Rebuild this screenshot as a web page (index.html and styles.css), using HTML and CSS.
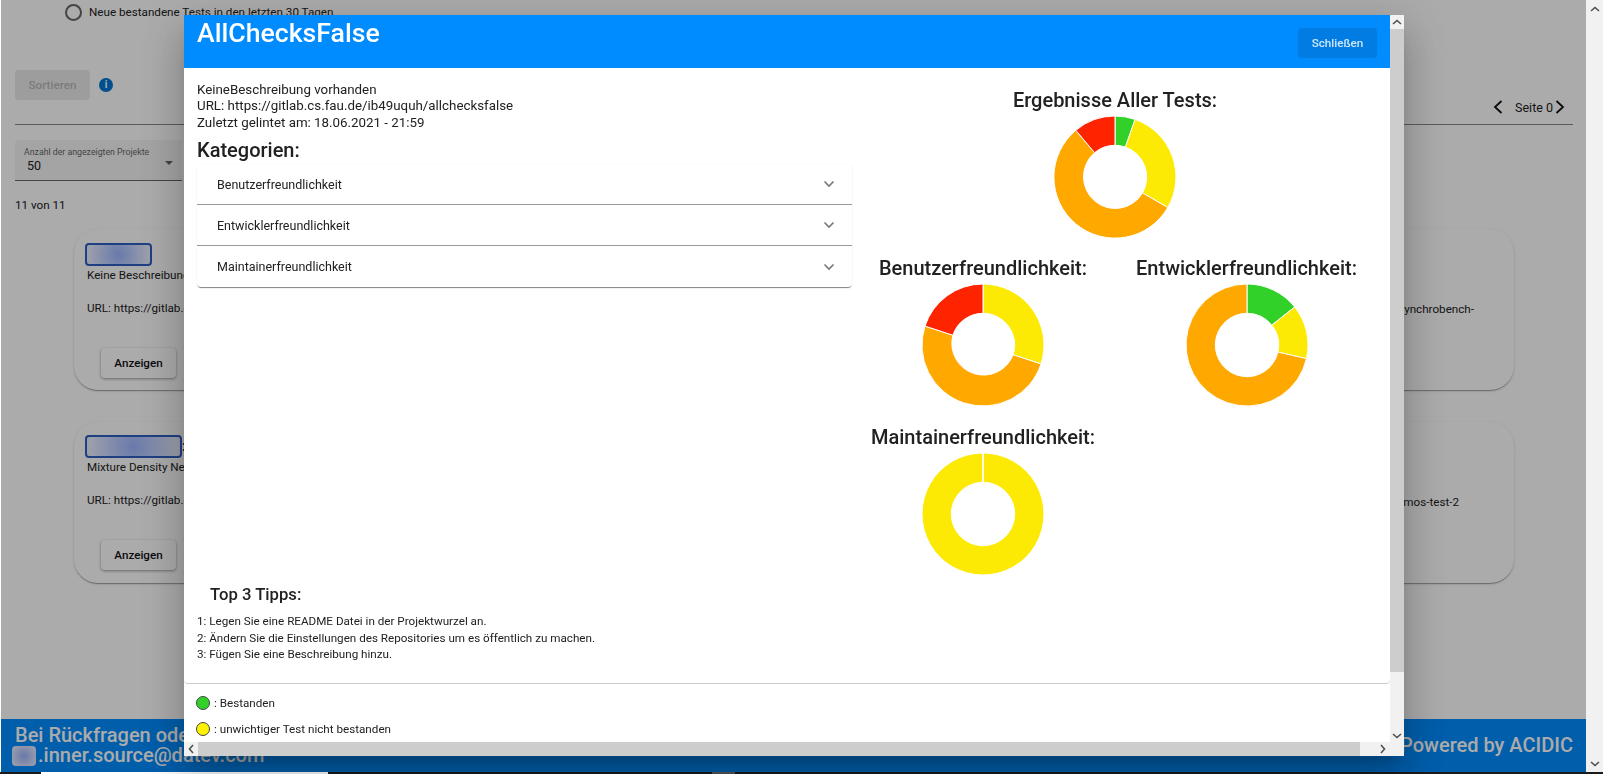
FILE: index.html
```html
<!DOCTYPE html>
<html lang="de">
<head>
<meta charset="UTF-8">
<meta name="viewport" content="width=device-width, initial-scale=1.0">
<title>AllChecksFalse</title>
<link rel="stylesheet" href="styles.css">
</head>
<body>
    <div class="page">
        <div class="radio-row">
            <span class="radio"></span>
            <span>Neue bestandene Tests in den letzten 30 Tagen</span>
        </div>
        <div class="sort-row">
            <div class="sort-left">
                <button class="sort-button">Sortieren</button>
                <span class="info-icon">i</span>
            </div>
            <div class="pager">
                <svg class="chevron" viewBox="0 0 10 14"><path d="M8.5 1 L2 7 L8.5 13"/></svg>
                <span class="pager-label">Seite 0</span>
                <svg class="chevron" viewBox="0 0 10 14"><path d="M1.5 1 L8 7 L1.5 13"/></svg>
            </div>
        </div>
        <div class="select-field">
            <div class="select-label">Anzahl der angezeigten Projekte</div>
            <div class="select-value">50</div>
            <span class="select-arrow"></span>
        </div>
        <div class="count">11 von 11</div>
        <div class="card-grid">
            <div class="card">
                <div class="card-title"><span class="redact redact-short"></span></div>
                <p class="card-desc">Keine Beschreibung</p>
                <p class="card-url">URL: https://gitlab.cs.fau.de</p>
                <button class="show-button">Anzeigen</button>
                <span class="card-tail">synchrobench-</span>
            </div>
            <div class="card">
                <div class="card-title"><span class="redact redact-long"></span>:</div>
                <p class="card-desc">Mixture Density Networks</p>
                <p class="card-url">URL: https://gitlab.cs.fau.de</p>
                <button class="show-button">Anzeigen</button>
                <span class="card-tail card-tail-short">mos-test-2</span>
            </div>
        </div>
        <footer class="footer">
            <div class="footer-contact">
                <div>Bei Rückfragen oder Anregungen</div>
                <div><span class="redact-footer"></span>.inner.source@datev.com</div>
            </div>
            <div class="footer-credit">Powered by ACIDIC</div>
        </footer>
    </div>

    <div class="page-scrollbar">
        <span class="scroll-arrow">
            <svg viewBox="0 0 10 6"><path d="M1 5 L5 1.5 L9 5"/></svg>
        </span>
        <span class="scroll-arrow">
            <svg viewBox="0 0 10 6"><path d="M1 1 L5 4.5 L9 1"/></svg>
        </span>
    </div>
    <div class="taskbar">
        <span class="taskbar-light"></span>
        <span class="taskbar-grey"></span>
    </div>

    <div class="overlay"></div>

    <div class="dialog">
        <div class="dialog-main">
            <div class="dialog-scroll">
                <header class="dialog-header">
                    <h1>AllChecksFalse</h1>
                    <button class="close-button">Schließen</button>
                </header>
                <div class="dialog-body">
                    <div class="info-column">
                        <div class="project-meta">
                            <div>KeineBeschreibung vorhanden</div>
                            <div>URL: https://gitlab.cs.fau.de/ib49uquh/allchecksfalse</div>
                            <div>Zuletzt gelintet am: 18.06.2021 - 21:59</div>
                        </div>
                        <h2 class="categories-title">Kategorien:</h2>
                        <div class="accordion">
                            <div class="accordion-row">
                                <span>Benutzerfreundlichkeit</span>
                                <svg class="expand-icon" viewBox="0 0 12 8"><path d="M1.5 1.5 L6 6 L10.5 1.5"/></svg>
                            </div>
                            <div class="accordion-row">
                                <span>Entwicklerfreundlichkeit</span>
                                <svg class="expand-icon" viewBox="0 0 12 8"><path d="M1.5 1.5 L6 6 L10.5 1.5"/></svg>
                            </div>
                            <div class="accordion-row">
                                <span>Maintainerfreundlichkeit</span>
                                <svg class="expand-icon" viewBox="0 0 12 8"><path d="M1.5 1.5 L6 6 L10.5 1.5"/></svg>
                            </div>
                        </div>
                        <div class="tips">
                            <h3>Top 3 Tipps:</h3>
                            <div>1: Legen Sie eine README Datei in der Projektwurzel an.</div>
                            <div>2: Ändern Sie die Einstellungen des Repositories um es öffentlich zu machen.</div>
                            <div>3: Fügen Sie eine Beschreibung hinzu.</div>
                        </div>
                    </div>
                    <div class="chart-column">
                        <div class="chart chart-all">
                            <h2>Ergebnisse Aller Tests:</h2>
                            <svg class="donut" viewBox="-61 -61 122 122">
                                <path class="green" d="M0 -61 A61 61 0 0 1 20.1 -57.6 L10.4 -29.9 A31.7 31.7 0 0 0 0 -31.7 Z"/>
                                <path class="yellow" d="M20.1 -57.6 A61 61 0 0 1 52.8 30.5 L27.5 15.9 A31.7 31.7 0 0 0 10.4 -29.9 Z"/>
                                <path class="orange" d="M52.8 30.5 A61 61 0 1 1 -39.2 -46.7 L-20.4 -24.3 A31.7 31.7 0 1 0 27.5 15.9 Z"/>
                                <path class="red" d="M-39.2 -46.7 A61 61 0 0 1 0 -61 L0 -31.7 A31.7 31.7 0 0 0 -20.4 -24.3 Z"/>
                            </svg>
                        </div>
                        <div class="chart-pair">
                            <div class="chart">
                                <h2>Benutzerfreundlichkeit:</h2>
                                <svg class="donut" viewBox="-61 -61 122 122">
                                    <path class="yellow" d="M0 -61 A61 61 0 0 1 58 18.9 L30.1 9.8 A31.7 31.7 0 0 0 0 -31.7 Z"/>
                                    <path class="orange" d="M58 18.9 A61 61 0 0 1 -58 -18.9 L-30.1 -9.8 A31.7 31.7 0 0 0 30.1 9.8 Z"/>
                                    <path class="red" d="M-58 -18.9 A61 61 0 0 1 0 -61 L0 -31.7 A31.7 31.7 0 0 0 -30.1 -9.8 Z"/>
                                </svg>
                            </div>
                            <div class="chart">
                                <h2>Entwicklerfreundlichkeit:</h2>
                                <svg class="donut" viewBox="-61 -61 122 122">
                                    <path class="green" d="M0 -61 A61 61 0 0 1 47.7 -38 L24.8 -19.8 A31.7 31.7 0 0 0 0 -31.7 Z"/>
                                    <path class="yellow" d="M47.7 -38 A61 61 0 0 1 59.5 13.6 L30.9 7.1 A31.7 31.7 0 0 0 24.8 -19.8 Z"/>
                                    <path class="orange" d="M59.5 13.6 A61 61 0 1 1 0 -61 L0 -31.7 A31.7 31.7 0 1 0 30.9 7.1 Z"/>
                                </svg>
                            </div>
                        </div>
                        <div class="chart chart-single">
                            <h2>Maintainerfreundlichkeit:</h2>
                            <svg class="donut" viewBox="-61 -61 122 122">
                                <path class="yellow" d="M0 -61 A61 61 0 1 1 -0.01 -61 L-0.01 -31.7 A31.7 31.7 0 1 0 0 -31.7 Z"/>
                                <path class="gap" d="M0 -61 L0 -31.7"/>
                            </svg>
                        </div>
                    </div>
                </div>
            </div>
            <div class="inner-vbar"><span class="inner-vbar-up"><svg viewBox="0 0 10 6"><path d="M1 5 L5 1.5 L9 5"/></svg></span><span class="inner-vbar-thumb"></span><span class="inner-vbar-track"></span></div>
        </div>
        <div class="legend">
            <div class="legend-row"><span class="dot dot-green"></span>: Bestanden</div>
            <div class="legend-row"><span class="dot dot-yellow"></span>: unwichtiger Test nicht bestanden</div>
        </div>
        <div class="dialog-hbar">
            <span class="hbar-left"><svg viewBox="0 0 6 10"><path d="M5 1 L1.5 5 L5 9"/></svg></span>
            <span class="hbar-thumb"></span>
            <span class="hbar-right"><svg viewBox="0 0 6 10"><path d="M1 1 L4.5 5 L1 9"/></svg></span>
        </div>
        <span class="legend-down"><svg viewBox="0 0 10 6"><path d="M1 1 L5 4.5 L9 1"/></svg></span>
    </div>
</body>
</html>
```

FILE: styles.css
```css
* {
    box-sizing: border-box;
}
html, body {
    height: 100%;
}
body {
    margin: 0;
    height: 774px;
    overflow: hidden;
    font-family: Roboto, "Liberation Sans", sans-serif;
    font-size: 11.67px;
    color: #212121;
    background: #fff;
    display: flex;
    flex-wrap: wrap;
    align-content: flex-start;
}
button {
    font-family: inherit;
}
svg path {
    fill: none;
    stroke: #505050;
    stroke-width: 1.6;
}

/* background page */
.page {
    width: 1586px;
    height: 772px;
    padding-left: 1px;
    display: flex;
    flex-direction: column;
    background: #fff;
}
.radio-row {
    display: flex;
    align-items: center;
    gap: 7px;
    height: 24px;
    margin-left: 64px;
}
.radio {
    width: 17px;
    height: 17px;
    border: 2px solid #666;
    border-radius: 50%;
}
.sort-row {
    display: flex;
    justify-content: space-between;
    margin: 46px 0 0 14px;
    width: 1558px;
    height: 55px;
    border-bottom: 1px solid #888;
}
.sort-left {
    display: flex;
    align-items: flex-start;
    gap: 9px;
}
.sort-button {
    width: 75px;
    height: 30px;
    border: 0;
    border-radius: 4px;
    background: #ebebeb;
    color: #b8b8b8;
    font-size: 11.67px;
    font-weight: 500;
}
.info-icon {
    width: 14px;
    height: 14px;
    margin-top: 8px;
    border-radius: 50%;
    background: #0277d4;
    color: #fff;
    font-size: 10px;
    font-weight: 700;
    line-height: 14px;
    text-align: center;
}
.pager {
    display: flex;
    align-items: center;
    height: 28px;
    margin: 23px 8px 0 0;
    font-size: 12.5px;
}
.pager-label {
    margin: 0 2px 0 12px;
}
.chevron {
    width: 10px;
    height: 14px;
}
.chevron path {
    stroke: #111;
    stroke-width: 1.8;
}
.select-field {
    position: relative;
    width: 167px;
    height: 41px;
    margin: 15px 0 0 14px;
    padding: 6px 9px;
    background: #f5f5f5;
    border-bottom: 1px solid #666;
    border-radius: 4px 4px 0 0;
}
.select-label {
    font-size: 8.75px;
    color: #666;
    line-height: 12px;
}
.select-value {
    margin-left: 3px;
    font-size: 12.5px;
    line-height: 16px;
}
.select-arrow {
    position: absolute;
    right: 9px;
    top: 21px;
    border: 4px solid transparent;
    border-top: 4px solid #666;
}
.count {
    margin: 16px 0 0 14px;
    line-height: 16px;
}
.card-grid {
    flex: 1;
    display: flex;
    flex-direction: column;
    gap: 32px;
    margin: 16px 0 0 73px;
    width: 1440px;
}
.card {
    position: relative;
    width: 1440px;
    height: 161px;
    padding: 14px 11px;
    border-radius: 24px;
    background: #fff;
    box-shadow: 0 2px 1px -1px rgba(0, 0, 0, 0.2), 0 1px 1px 0 rgba(0, 0, 0, 0.14), 0 1px 3px 0 rgba(0, 0, 0, 0.12);
}
.card + .card {
    padding-top: 13px;
}
.card-title {
    display: flex;
    font-size: 14px;
    font-weight: 500;
    line-height: 23px;
}
.redact {
    display: block;
    height: 23px;
    border: 2px solid #2f5fc4;
    border-radius: 4px;
    background: radial-gradient(circle, #9bb6ff, #e8ecff 90%);
}
.redact-short {
    width: 67px;
}
.redact-long {
    width: 97px;
}
.card-desc, .card-url {
    margin: 0;
    line-height: 16px;
}
.card-desc {
    margin: 1px 0 0 2px;
}
.card-url {
    margin: 17px 0 0 2px;
}
.show-button {
    display: block;
    width: 75px;
    height: 30px;
    margin: 32px 0 0 16px;
    border: 0;
    border-radius: 4px;
    background: #fff;
    box-shadow: 0 1px 3px rgba(0, 0, 0, 0.4);
    color: #111;
    font-size: 11.67px;
    font-weight: 500;
}
.card-tail {
    position: absolute;
    top: 72px;
    right: 40px;
    line-height: 16px;
}
.card-tail-short {
    right: 55px;
}
.footer {
    display: flex;
    justify-content: space-between;
    align-items: center;
    flex: none;
    height: 53px;
    padding: 0 13px 0 14px;
    background: #008cff;
    color: #fff;
    font-size: 20px;
    font-weight: 500;
    line-height: 19.5px;
}
.redact-footer {
    display: inline-block;
    width: 24px;
    height: 20px;
    margin: -2px 2px -2px -3px;
    vertical-align: middle;
    border-radius: 4px;
    background: radial-gradient(circle, #9bb6ff, #e8ecff 90%);
}

/* window chrome behind the dialog */
.page-scrollbar {
    width: 17px;
    height: 772px;
    display: flex;
    flex-direction: column;
    justify-content: space-between;
    background: #f1f1f1;
}
.scroll-arrow {
    display: flex;
    align-items: center;
    justify-content: center;
    height: 17px;
}
.scroll-arrow svg, .inner-vbar-up svg, .legend-down svg {
    width: 10px;
    height: 6px;
}
.taskbar {
    display: flex;
    width: 100%;
    height: 2px;
    background: #1b1b1b;
}
.taskbar-light {
    width: 287px;
    margin-left: 41px;
    background: #fff;
}
.taskbar-grey {
    width: 23px;
    margin-left: 384px;
    background: #555;
}

.overlay {
    position: fixed;
    inset: 0 17px 2px 1px;
    background: rgba(0, 0, 0, 0.33);
}

/* dialog */
.dialog {
    position: fixed;
    left: 184px;
    top: 15px;
    width: 1220px;
    height: 741px;
    display: flex;
    flex-direction: column;
    background: #fff;
    box-shadow: 0 11px 15px -7px rgba(0, 0, 0, 0.2), 0 24px 38px 3px rgba(0, 0, 0, 0.14), 0 9px 46px 8px rgba(0, 0, 0, 0.12);
}
.dialog-main {
    display: flex;
    height: 669px;
    flex: none;
}
.dialog-scroll {
    width: 1206px;
    display: flex;
    flex-direction: column;
    border-bottom: 1px solid #ccc;
    border-radius: 0 0 4px 4px;
}
.dialog-header {
    display: flex;
    justify-content: space-between;
    flex: none;
    height: 53px;
    padding: 3px 13px 0;
    background: #008cff;
}
.dialog-header h1 {
    margin: 0;
    font-size: 26.67px;
    font-weight: 500;
    line-height: 30px;
    color: #fff;
}
.close-button {
    width: 79px;
    height: 30px;
    margin-top: 10px;
    border: 0;
    border-radius: 4px;
    background: #007ce2;
    color: #cfe7fb;
    font-size: 11.67px;
    font-weight: 500;
}
.dialog-body {
    flex: 1;
    display: flex;
    padding: 13.8px 13px 0;
}
.info-column {
    width: 655px;
    display: flex;
    flex-direction: column;
}
.project-meta {
    font-size: 13.33px;
    line-height: 16.67px;
}
.categories-title {
    margin: 5.8px 0 2.4px;
    font-size: 20px;
    font-weight: 500;
    line-height: 24px;
}
.accordion {
    border-radius: 4px;
    box-shadow: 0 2px 1px -1px rgba(0, 0, 0, 0.4), 0 1px 1px 0 rgba(0, 0, 0, 0.14), 0 0 2px rgba(0, 0, 0, 0.06);
}
.accordion-row {
    display: flex;
    justify-content: space-between;
    align-items: center;
    height: 41px;
    padding: 0 17px 0 20px;
    border-bottom: 1px solid #999;
    font-size: 12.5px;
}
.accordion-row:last-child {
    border-bottom: 0;
}
.expand-icon {
    width: 12px;
    height: 8px;
}
.expand-icon path {
    stroke: #777;
}
.tips {
    margin-top: auto;
    padding-bottom: 20px;
    line-height: 16.67px;
}
.tips h3 {
    margin: 0 0 8.3px 13px;
    font-size: 16.67px;
    font-weight: 500;
    line-height: 20px;
}
.chart-column {
    width: 490px;
    margin-left: 18px;
    display: flex;
    flex-direction: column;
}
.chart {
    display: flex;
    flex-direction: column;
    align-items: center;
}
.chart h2 {
    margin: 0;
    font-size: 20px;
    font-weight: 500;
    line-height: 24px;
    white-space: nowrap;
}
.donut {
    display: block;
    width: 122px;
    height: 122px;
    margin-top: 4px;
}
.donut path {
    stroke: #fff;
    stroke-width: 1;
}
.donut .green { fill: #32d12a; }
.donut .yellow { fill: #fdea04; }
.donut .orange { fill: #ffa800; }
.donut .red { fill: #ff2400; }
.chart-all {
    padding-top: 6.2px;
}
.chart-pair {
    display: flex;
    gap: 37.5px;
    margin-top: 18.3px;
}
.chart-pair .chart {
    width: 226px;
}
.chart-single {
    width: 226px;
    margin-top: 18.5px;
}

/* legend and dialog scrollbars */
.legend {
    flex: 1;
    display: flex;
    flex-direction: column;
    gap: 4px;
    padding: 8px 0 0 12px;
}
.legend-row {
    display: flex;
    align-items: center;
    gap: 4px;
    height: 22px;
}
.dot {
    width: 14px;
    height: 14px;
    border: 1px solid #444;
    border-radius: 50%;
}
.dot-green { background: #32d12a; }
.dot-yellow { background: #fff200; }
.dialog-hbar {
    display: flex;
    flex: none;
    height: 14px;
    background: #f1f1f1;
}
.hbar-left, .hbar-right {
    display: flex;
    align-items: center;
    justify-content: center;
    width: 14px;
}
.hbar-right {
    justify-content: flex-end;
    margin-left: auto;
    width: 44px;
    padding-right: 18px;
}
.hbar-left svg, .hbar-right svg {
    width: 6px;
    height: 10px;
}
.hbar-thumb {
    width: 1162px;
    background: #cdcdcd;
}
.inner-vbar {
    width: 14px;
    display: flex;
    flex-direction: column;
}
.inner-vbar-up {
    display: flex;
    align-items: center;
    justify-content: center;
    flex: none;
    height: 14px;
    background: #f1f1f1;
}
.inner-vbar-thumb {
    flex: none;
    height: 643px;
    background: #cdcdcd;
}
.inner-vbar-track {
    flex: 1;
    background: #f1f1f1;
}
.legend-down {
    position: absolute;
    right: 0;
    bottom: 14px;
    width: 14px;
    height: 58px;
    padding: 49px 2px 0;
    background: #f1f1f1;
    line-height: 0;
}
```
